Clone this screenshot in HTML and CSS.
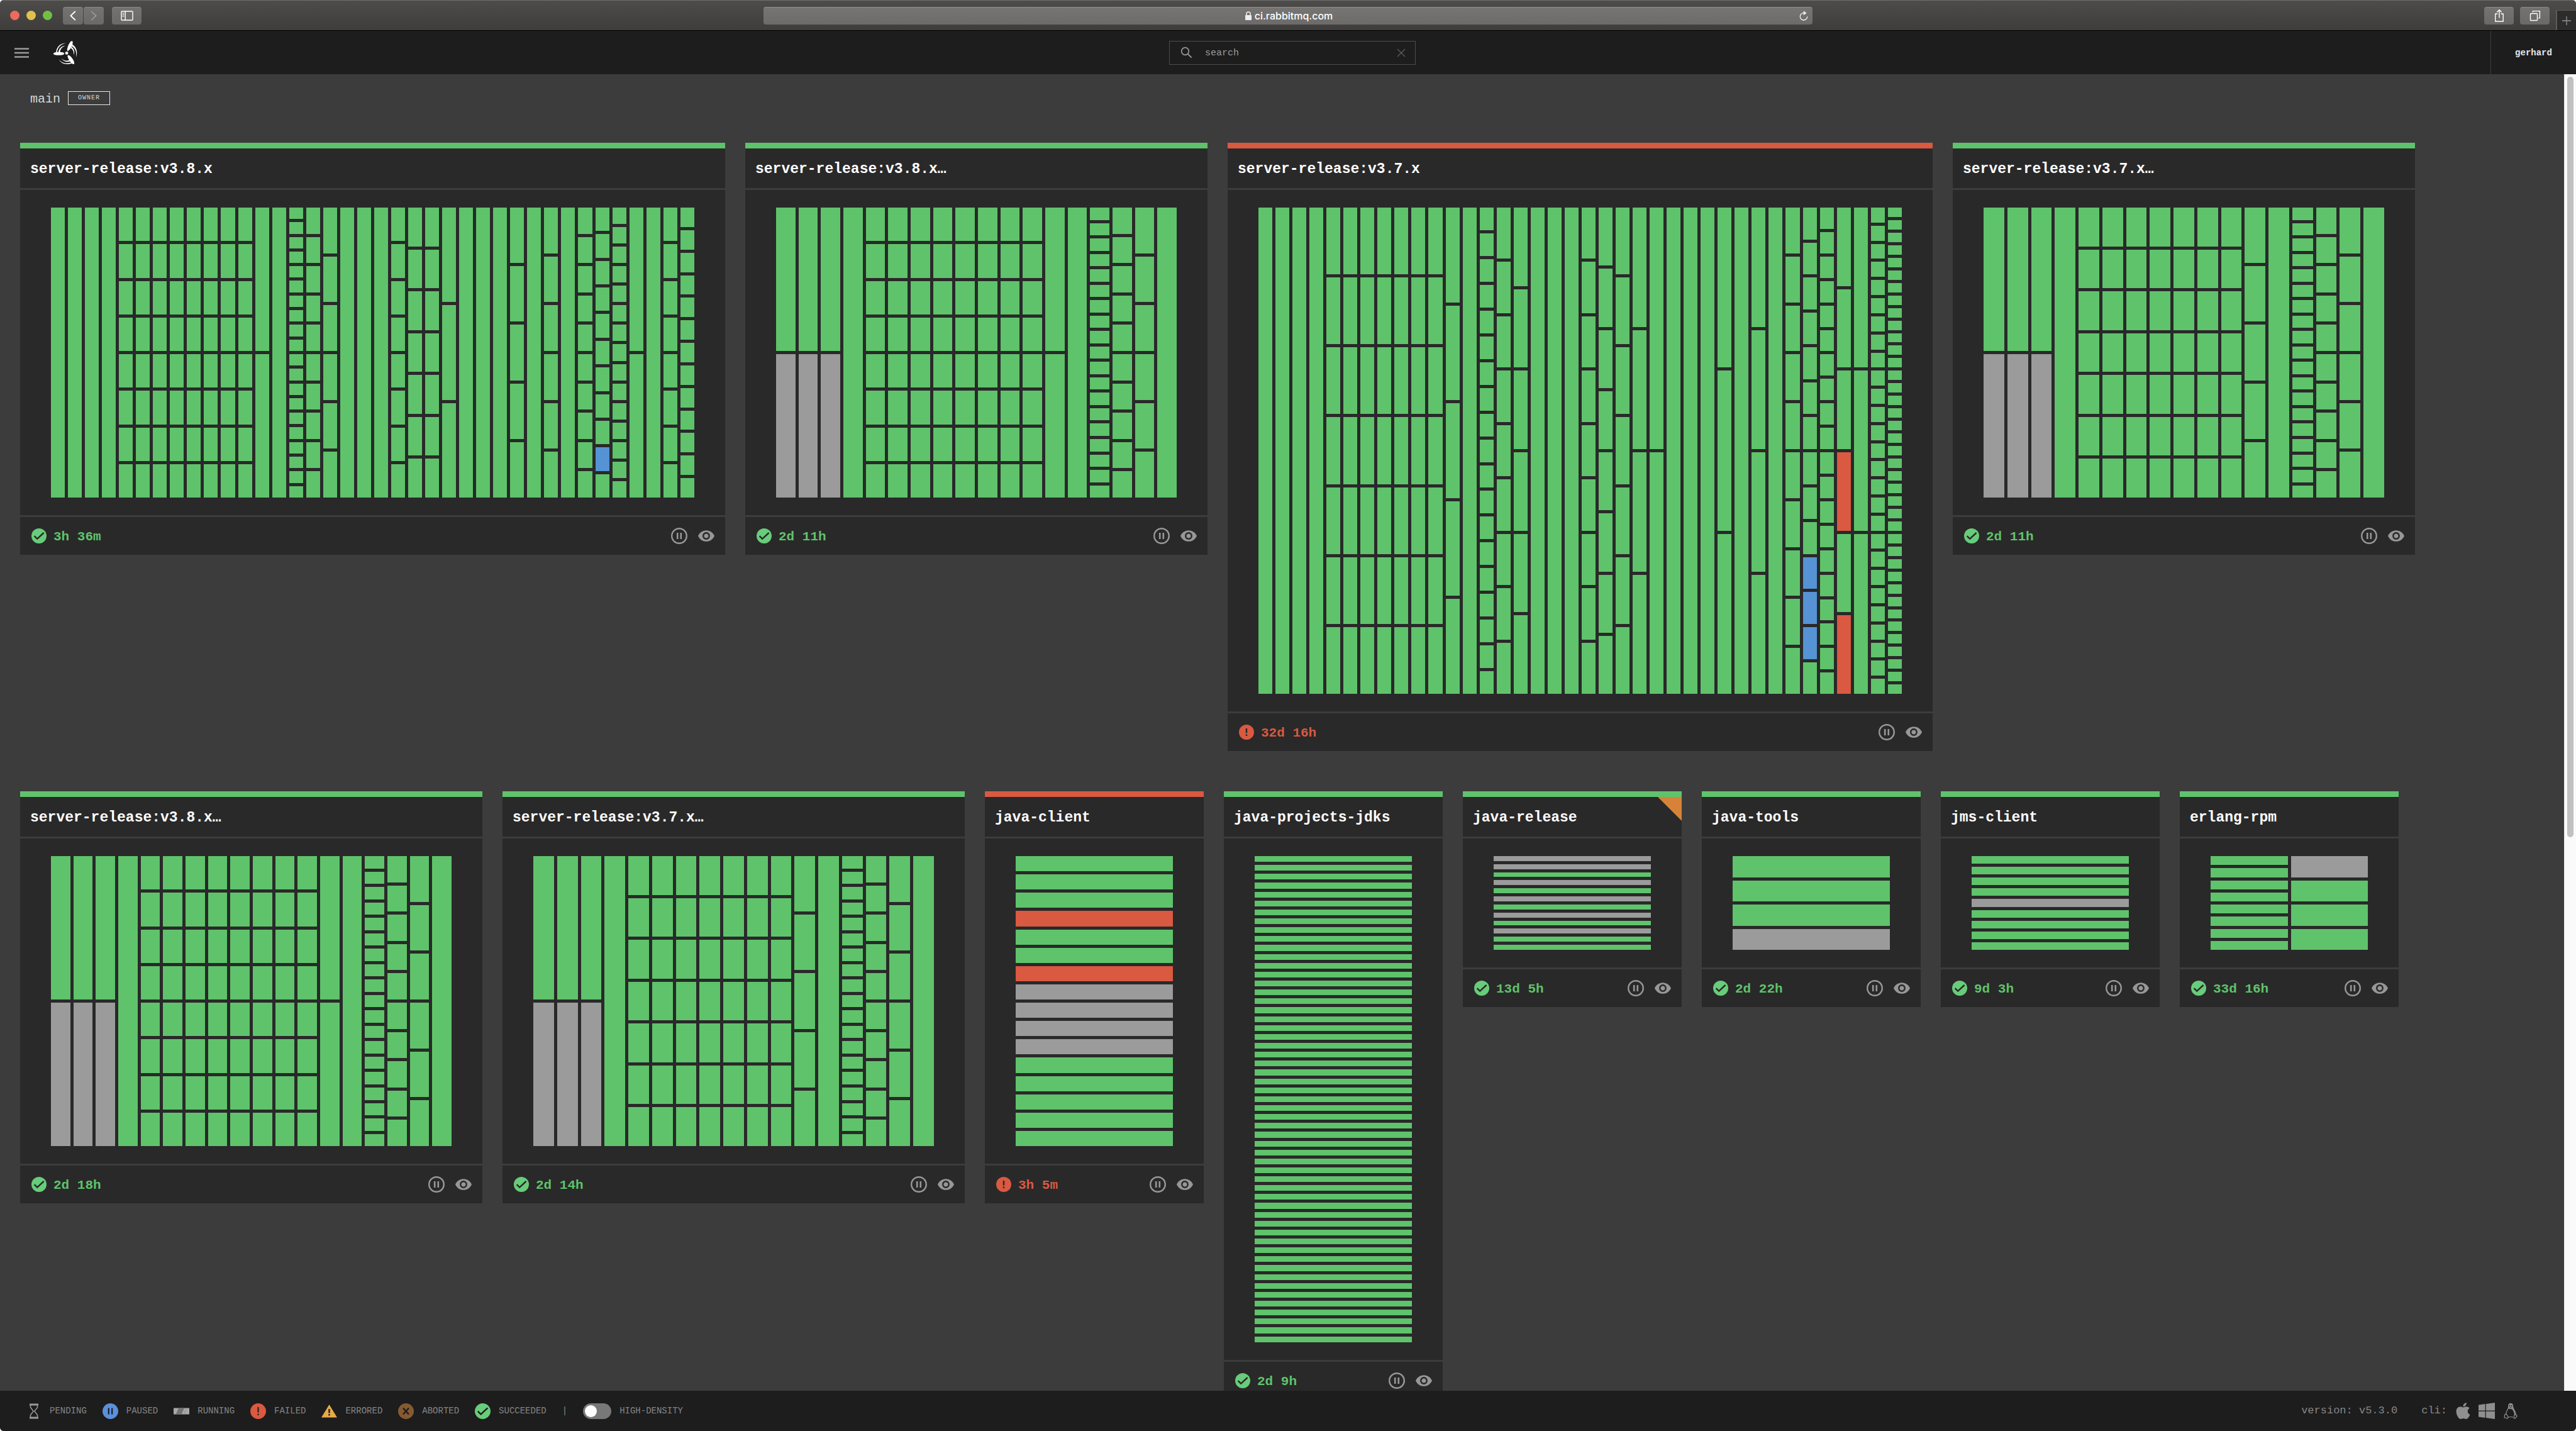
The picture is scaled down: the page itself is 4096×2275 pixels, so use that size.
FILE: index.html
```html
<!DOCTYPE html>
<html lang="en">
<head>
<meta charset="utf-8">
<title>Concourse</title>
<link rel="stylesheet" href="styles.css">
</head>
<body>
<svg class="sprite" aria-hidden="true">
  <symbol id="succeeded" viewBox="0 0 24 24"><circle cx="12" cy="12" r="12" fill="#68cc7a"/><path d="M4.6 12.2l4.6 4.4L19.6 7" fill="none" stroke="#292929" stroke-width="2.4"/></symbol>
  <symbol id="failed" viewBox="0 0 24 24"><circle cx="12" cy="12" r="12" fill="#d95941"/><path d="M12 6v7.4M12 15.6v2.4" stroke="#292929" stroke-width="2.4"/></symbol>
  <symbol id="pause" viewBox="0 0 26 26"><circle cx="13" cy="13" r="11.8" fill="none" stroke="#979797" stroke-width="2.4"/><path d="M10.2 8v10M15.8 8v10" stroke="#979797" stroke-width="2.6"/></symbol>
  <symbol id="eye" viewBox="1 4.5 22 15"><path fill="#979797" d="M12 4.5C7 4.5 2.73 7.61 1 12c1.73 4.39 6 7.5 11 7.5s9.27-3.11 11-7.5c-1.73-4.39-6-7.5-11-7.5zM12 17c-2.76 0-5-2.24-5-5s2.24-5 5-5 5 2.24 5 5-2.24 5-5 5zm0-8c-1.66 0-3 1.34-3 3s1.34 3 3 3 3-1.34 3-3-1.34-3-3-3z"/></symbol>
</svg>

<div class="window">
  <div class="chrome">
    <div class="chrome-left">
      <span class="light light-close"></span><span class="light light-min"></span><span class="light light-max"></span>
      <div class="nav-pair">
        <button class="tool tool-nav" aria-label="Back"><svg width="10" height="16" viewBox="0 0 10 16"><path d="M8.8 1L1.4 8l7.4 7" fill="none" stroke="#fff" stroke-width="1.8"/></svg></button>
        <button class="tool tool-nav" aria-label="Forward"><svg width="10" height="16" viewBox="0 0 10 16"><path d="M1.2 1l7.4 7-7.4 7" fill="none" stroke="#a09f9d" stroke-width="1.6"/></svg></button>
      </div>
      <button class="tool" aria-label="Show sidebar"><svg width="20" height="16" viewBox="0 0 20 16"><rect x="1" y="1" width="18" height="14" rx="1" fill="none" stroke="#fff" stroke-width="1.4"/><path d="M7.2 1v14" stroke="#fff" stroke-width="1.4"/><path d="M2.6 4h2.8M2.6 6.5h2.8M2.6 9h2.8" stroke="#ddd" stroke-width="1.3"/></svg></button>
    </div>
    <div class="address">
      <span class="address-url"><svg width="12" height="14" viewBox="0 0 12 14"><path d="M3 7V4a3 3 0 0 1 6 0v3" fill="none" stroke="#eee" stroke-width="1.5"/><rect x="1" y="6" width="10" height="8" rx="1" fill="#eee"/></svg>ci.rabbitmq.com</span>
      <button class="reload" aria-label="Reload"><svg width="16" height="18" viewBox="0 0 16 18"><path d="M8 4.6a5.7 5.7 0 1 0 5.7 5.7" fill="none" stroke="#eee" stroke-width="1.3"/><path d="M7.6 1.2l5 3.5-5 3.5z" fill="#eee"/></svg></button>
    </div>
    <div class="chrome-right">
      <button class="tool" aria-label="Share"><svg width="16" height="22" viewBox="0 0 16 22"><path d="M5.4 8H1.8v12h12.4V8h-3.6M8 14.4V2M4.2 5.6L8 1.8l3.8 3.8" fill="none" stroke="#fff" stroke-width="1.4"/></svg></button>
      <button class="tool" aria-label="Show tabs"><svg width="18" height="18" viewBox="0 0 18 18"><rect x="1.5" y="5.5" width="11" height="11" rx="1" fill="none" stroke="#fff" stroke-width="1.4"/><path d="M5.4 3.6V1.6h11v11h-2.2" fill="none" stroke="#fff" stroke-width="1.4"/></svg></button>
      <button class="new-tab" aria-label="New tab"><svg width="14" height="14" viewBox="0 0 14 14"><path d="M7 0v14M0 7h14" stroke="#959595" stroke-width="1.3"/></svg></button>
    </div>
  </div>

  <header class="topbar">
    <div class="topbar-left">
      <button class="square" aria-label="Menu"><svg width="23" height="16" viewBox="0 0 23 16"><path d="M0 1.5h23M0 8h23M0 14.5h23" stroke="#9b9b9b" stroke-width="2.6"/></svg></button>
      <a class="square" href="/" aria-label="Home"><svg width="38" height="38" viewBox="0 0 60 60" fill="#fff">
        <circle cx="33.2" cy="30.6" r="3.8"/>
        <path d="M35.5 25.7C33.5 24 34.4 17.600 38 9.600 41.200 2.700 44 .2 46.600.3 49 .6 48.800 4.600 47.200 10 45 17.300 41.500 21.600 37.500 25z"/>
        <path d="M27 31.500C27 33.600 24.500 36 15 36 5 36 0 34.600 0 32.300 0 29.800 4.500 28.800 11 28.200 19 27.500 27 28.700 27 31.500z"/>
        <path d="M35.400 38.500C35.200 36.500 36.500 35.300 38.500 36 43 38 47.500 43.500 50.500 49.500 52.500 54 53 58 51.300 58.400 49 59 45 56.300 42 52 39 47.700 36.200 43 35.400 38.500z"/>
        <path d="M6.500 29C7.500 15 17 5.500 32 6 19.500 7.500 10.500 16 9 29z"/>
        <path d="M12.500 29C13.500 19.500 19.500 13 29.500 12.200 21.500 15 17 20.500 16.500 29z"/>
        <path d="M47 8.500C57.500 15 62 27.500 56.500 41.500 58.800 28.500 55.500 19 45.500 13z"/>
        <path d="M45 15C52 19.500 54.500 27.500 50.500 36 51.500 28.500 50 22.500 43.500 18z"/>
        <path d="M13.300 45C18 53.500 28 59.500 46 54L47 56C31 62 17.500 56.500 13.300 45z"/>
        <path d="M20 43.500C25 49.300 32 51.200 40 48.300L42 51.500C33 54.500 24 51.500 20 43.500z"/>
      </svg></a>
    </div>
    <label class="search">
      <svg width="19" height="19" viewBox="0 0 19 19"><circle cx="7.500" cy="7.500" r="5.800" fill="none" stroke="#9b9b9b" stroke-width="1.700"/><path d="M11.600 11.600l6 6" stroke="#9b9b9b" stroke-width="1.900"/></svg>
      <input type="text" placeholder="search" aria-label="search">
      <button class="clear" aria-label="Clear search"><svg width="14" height="14" viewBox="0 0 14 14"><path d="M1 1l12 12M13 1L1 13" stroke="#5c5c5c" stroke-width="1.300"/></svg></button>
    </label>
    <a class="user" href="#user">gerhard</a>
  </header>

  <div class="body">
    <main class="dashboard">
      <div class="team"><h1 class="team-name">main</h1><span class="team-role">OWNER</span></div>
      <div class="cards">

        <article class="card card-wide">
          <h2 class="card-title">server-release:v3.8.x</h2>
          <div class="preview" data-jobs="1s*4 8s*8 2s 1s 20s 10s 6s 1s*3 8s 7s*2 3s 1s*3 5s 1s 6s 1s 10s 9s1p1s 15s 2s 1s 8s 13s"></div>
          <div class="card-foot"><svg class="status"><use href="#succeeded"/></svg><span class="age">3h 36m</span><button class="act" aria-label="Pause"><svg class="i-pause"><use href="#pause"/></svg></button><button class="act" aria-label="Visibility"><svg class="i-eye"><use href="#eye"/></svg></button></div>
        </article>

        <article class="card card-medium">
          <h2 class="card-title">server-release:v3.8.x…</h2>
          <div class="preview" data-jobs="1s1n*3 1s 8s*8 2s 1s 19s 10s 6s 1s"></div>
          <div class="card-foot"><svg class="status"><use href="#succeeded"/></svg><span class="age">2d 11h</span><button class="act" aria-label="Pause"><svg class="i-pause"><use href="#pause"/></svg></button><button class="act" aria-label="Visibility"><svg class="i-eye"><use href="#eye"/></svg></button></div>
        </article>

        <article class="card card-wide card-failed">
          <h2 class="card-title">server-release:v3.7.x</h2>
          <div class="preview preview-tall" data-jobs="1s*4 7s*7 5s 1s 19s 9s 6s 1s*3 9s 8s 7s 4s 2s 1s*3 3s 1s 4s 1s 10s 10s3p1s 20s 3s1f1s1f 3s 27s 39s"></div>
          <div class="card-foot"><svg class="status"><use href="#failed"/></svg><span class="age">32d 16h</span><button class="act" aria-label="Pause"><svg class="i-pause"><use href="#pause"/></svg></button><button class="act" aria-label="Visibility"><svg class="i-eye"><use href="#eye"/></svg></button></div>
        </article>

        <article class="card card-medium">
          <h2 class="card-title">server-release:v3.7.x…</h2>
          <div class="preview" data-jobs="1s1n*3 1s 7s*7 5s 1s 19s 10s 6s 1s"></div>
          <div class="card-foot"><svg class="status"><use href="#succeeded"/></svg><span class="age">2d 11h</span><button class="act" aria-label="Pause"><svg class="i-pause"><use href="#pause"/></svg></button><button class="act" aria-label="Visibility"><svg class="i-eye"><use href="#eye"/></svg></button></div>
        </article>

        <article class="card card-medium">
          <h2 class="card-title">server-release:v3.8.x…</h2>
          <div class="preview" data-jobs="1s1n*3 1s 8s*8 2s 1s 19s 10s 6s 1s"></div>
          <div class="card-foot"><svg class="status"><use href="#succeeded"/></svg><span class="age">2d 18h</span><button class="act" aria-label="Pause"><svg class="i-pause"><use href="#pause"/></svg></button><button class="act" aria-label="Visibility"><svg class="i-eye"><use href="#eye"/></svg></button></div>
        </article>

        <article class="card card-medium">
          <h2 class="card-title">server-release:v3.7.x…</h2>
          <div class="preview" data-jobs="1s1n*3 1s 7s*7 5s 1s 19s 10s 6s 1s"></div>
          <div class="card-foot"><svg class="status"><use href="#succeeded"/></svg><span class="age">2d 14h</span><button class="act" aria-label="Pause"><svg class="i-pause"><use href="#pause"/></svg></button><button class="act" aria-label="Visibility"><svg class="i-eye"><use href="#eye"/></svg></button></div>
        </article>

        <article class="card card-failed">
          <h2 class="card-title">java-client</h2>
          <div class="preview" data-jobs="3s1f2s1f4n5s"></div>
          <div class="card-foot"><svg class="status"><use href="#failed"/></svg><span class="age">3h 5m</span><button class="act" aria-label="Pause"><svg class="i-pause"><use href="#pause"/></svg></button><button class="act" aria-label="Visibility"><svg class="i-eye"><use href="#eye"/></svg></button></div>
        </article>

        <article class="card">
          <h2 class="card-title">java-projects-jdks</h2>
          <div class="preview preview-tall" data-jobs="55s"></div>
          <div class="card-foot"><svg class="status"><use href="#succeeded"/></svg><span class="age">2d 9h</span><button class="act" aria-label="Pause"><svg class="i-pause"><use href="#pause"/></svg></button><button class="act" aria-label="Visibility"><svg class="i-eye"><use href="#eye"/></svg></button></div>
        </article>

        <article class="card card-flagged">
          <h2 class="card-title">java-release</h2>
          <div class="preview preview-short" data-jobs="2n1s1n1s1n1s1n1s1n2s"></div>
          <div class="card-foot"><svg class="status"><use href="#succeeded"/></svg><span class="age">13d 5h</span><button class="act" aria-label="Pause"><svg class="i-pause"><use href="#pause"/></svg></button><button class="act" aria-label="Visibility"><svg class="i-eye"><use href="#eye"/></svg></button></div>
        </article>

        <article class="card">
          <h2 class="card-title">java-tools</h2>
          <div class="preview preview-short" data-jobs="3s1n"></div>
          <div class="card-foot"><svg class="status"><use href="#succeeded"/></svg><span class="age">2d 22h</span><button class="act" aria-label="Pause"><svg class="i-pause"><use href="#pause"/></svg></button><button class="act" aria-label="Visibility"><svg class="i-eye"><use href="#eye"/></svg></button></div>
        </article>

        <article class="card">
          <h2 class="card-title">jms-client</h2>
          <div class="preview preview-short" data-jobs="4s1n4s"></div>
          <div class="card-foot"><svg class="status"><use href="#succeeded"/></svg><span class="age">9d 3h</span><button class="act" aria-label="Pause"><svg class="i-pause"><use href="#pause"/></svg></button><button class="act" aria-label="Visibility"><svg class="i-eye"><use href="#eye"/></svg></button></div>
        </article>

        <article class="card">
          <h2 class="card-title">erlang-rpm</h2>
          <div class="preview preview-short" data-jobs="8s 1n3s"></div>
          <div class="card-foot"><svg class="status"><use href="#succeeded"/></svg><span class="age">33d 16h</span><button class="act" aria-label="Pause"><svg class="i-pause"><use href="#pause"/></svg></button><button class="act" aria-label="Visibility"><svg class="i-eye"><use href="#eye"/></svg></button></div>
        </article>

      </div>
    </main>
    <div class="scrollbar"><div class="scroll-thumb"></div></div>
  </div>

  <footer class="legend">
    <div class="legend-items">
      <span class="legend-item"><svg class="legend-icon" viewBox="0 0 25 25"><path d="M6 .5h14v3H6zM6 21.500h14v3H6z" fill="#9b9b9b"/><path d="M7.500 3v3.500L12.200 12.500 7.500 18.500V22M18.500 3v3.500L13.800 12.500l4.700 6V22" fill="none" stroke="#9b9b9b" stroke-width="1.500"/></svg>PENDING</span>
      <span class="legend-item"><svg class="legend-icon" viewBox="0 0 25 25"><circle cx="12.500" cy="12.500" r="12.500" fill="#5c8fdc"/><path d="M9.800 7.500v10M15.200 7.500v10" stroke="#1d1d1d" stroke-width="2.200"/></svg>PAUSED</span>
      <span class="legend-item"><svg class="legend-icon" viewBox="0 0 25 25"><path d="M0 7.500h25v10H0z" fill="#a9a9a9"/><path d="M8 7.500h9L12.500 17.500H3.500z" fill="#747474"/><path d="M20 7.500h2L17.500 17.500h-2z" fill="#9a9a9a"/></svg>RUNNING</span>
      <span class="legend-item"><svg class="legend-icon" viewBox="0 0 25 25"><circle cx="12.500" cy="12.500" r="12.500" fill="#d95941"/><path d="M12.500 6v8.500M12.500 16.500v2.500" stroke="#1d1d1d" stroke-width="2"/></svg>FAILED</span>
      <span class="legend-item"><svg class="legend-icon" viewBox="0 0 25 25"><path d="M12.500 2L25 22.500H0z" fill="#e9a944"/><path d="M12.500 9v6.500M12.500 17v2.500" stroke="#1d1d1d" stroke-width="2.400"/></svg>ERRORED</span>
      <span class="legend-item"><svg class="legend-icon" viewBox="0 0 25 25"><circle cx="12.500" cy="12.500" r="12.500" fill="#865a30"/><path d="M8 7.500l9 10M17 7.500l-9 10" stroke="#1d1d1d" stroke-width="2.400"/></svg>ABORTED</span>
      <span class="legend-item"><svg class="legend-icon" viewBox="0 0 25 25"><circle cx="12.500" cy="12.500" r="12.500" fill="#68cc7a"/><path d="M4.800 12.700l4.800 4.600L20.400 7.300" fill="none" stroke="#1d1d1d" stroke-width="2.400"/></svg>SUCCEEDED</span>
      <span>|</span>
      <label class="legend-item"><input class="toggle" type="checkbox">HIGH-DENSITY</label>
    </div>
    <div class="info">
      <span>version: v5.3.0</span>
      <div class="cli">
        <span>cli:</span>
        <a href="#darwin" aria-label="macOS"><svg viewBox="-40 32 448 448"><path fill="#8f8f8f" d="M318.7 268.7c-.2-36.7 16.4-64.4 50-84.8-18.8-26.9-47.2-41.7-84.7-44.6-35.5-2.8-74.3 20.7-88.5 20.7-15 0-49.400-19.700-76.400-19.700C63.300 141.200 4 184.800 4 273.500q0 39.300 14.400 81.200c12.800 36.700 59 126.700 107.200 125.200 25.200-.6 43-17.900 75.800-17.900 31.800 0 48.300 17.900 76.400 17.900 48.600-.7 90.400-82.500 102.600-119.300-65.200-30.700-61.700-90-61.700-91.900zm-56.600-164.200c27.300-32.400 24.800-61.900 24-72.500-24.100 1.400-52 16.400-67.900 34.900-17.500 19.800-27.800 44.300-25.600 71.900 26.100 2 49.900-11.400 69.500-34.300z"/></svg></a>
        <a href="#windows" aria-label="Windows"><svg viewBox="0 32 448 448"><path fill="#8f8f8f" d="M0 93.700l183.600-25.300v177.400H0V93.700zm0 324.600l183.600 25.300V268.400H0v149.900zm203.800 28L448 480V268.400H203.800v177.900zm0-380.600v180.100H448V32L203.800 65.700z"/></svg></a>
        <a href="#linux" aria-label="Linux"><svg viewBox="0 0 26 26"><path d="M9.200 9.500C8.800 6 8.500 1 13 .800c4.500.2 4.200 4 4.400 6.200.4 3 4.400 6.500 4.300 12.500l-2.600.5c0-4-1.500-6.500-3.500-9.500z" fill="#8f8f8f"/><path d="M9.300 8.500C8.300 11.500 5.600 14 5.500 18M9 23.200c2.500-.9 5.500-.9 8 0" fill="none" stroke="#8f8f8f" stroke-width="1.200"/><path d="M3.600 19l2.700-.8 3.200 5.200-2 1.600-4.300-1.400zM22.600 19.500l-3.600 0-1 4.500 1.600 1.200 3.600-3.700z" fill="none" stroke="#8f8f8f" stroke-width="1.200"/><circle cx="11.300" cy="5" r="1" fill="#1d1d1d"/><circle cx="14.600" cy="5" r="1" fill="#1d1d1d"/><path d="M11 7.400h4l-2 1.400z" fill="#1d1d1d"/></svg></a>
      </div>
    </div>
  </footer>
</div>
<script src="preview.js"></script>
</body>
</html>
```

FILE: styles.css
```css
* { box-sizing: border-box; }

body {
  margin: 0;
  background: #fff;
  color: #fff;
  font-family: "Liberation Mono", monospace;
}

h1, h2 { margin: 0; }

button {
  padding: 0;
  border: 0;
  background: none;
  font: inherit;
  color: inherit;
}

a { color: inherit; text-decoration: none; }

svg { display: block; }

.sprite { position: absolute; width: 0; height: 0; }

.window {
  display: flex;
  flex-direction: column;
  height: 100vh;
  overflow: hidden;
  border-radius: 6px;
  background: #3c3c3c;
}

/* Browser toolbar */
.chrome {
  display: grid;
  grid-template-columns: 1fr minmax(0, 1668px) 1fr;
  flex: none;
  align-items: center;
  height: 49px;
  border-top: 1px solid #6e6d6b;
  border-bottom: 1px solid #000;
  background: linear-gradient(#4d4c4a, #3e3d3b);
}

.chrome-left {
  display: flex;
  align-items: center;
  gap: 11px;
  padding-left: 16px;
}

.light { width: 15px; height: 15px; border-radius: 50%; }
.light-close { background: #ed6a5e; }
.light-min { background: #e0c14c; }
.light-max { background: #72bf47; }

.nav-pair { display: flex; gap: 1px; margin: 0 2px 0 6px; }

.tool {
  display: flex;
  align-items: center;
  justify-content: center;
  width: 47px;
  height: 28px;
  border-top: 1px solid #8a8987;
  border-radius: 4px;
  background: linear-gradient(#747371, #6a6967);
}

.tool-nav { width: 32px; }

.address {
  display: flex;
  align-items: center;
  height: 28px;
  padding: 0 6px;
  border-top: 1px solid #8f8e8c;
  border-radius: 4px;
  background: linear-gradient(#767573, #6c6b69);
}

.address-url {
  display: flex;
  flex: 1;
  align-items: center;
  justify-content: center;
  gap: 4px;
  padding-left: 18px;
  font: 500 16px/20px Inter, sans-serif;
}

.chrome-right {
  display: flex;
  align-items: center;
  justify-content: flex-end;
  gap: 10px;
  height: 47px;
}

.new-tab {
  display: flex;
  align-items: center;
  justify-content: center;
  align-self: flex-end;
  width: 32px;
  height: 32px;
  border-top: 1px solid #5c5b5a;
  border-left: 2px solid #5c5b5a;
  background: #2d2c2c;
}

/* Top bar */
.topbar {
  display: flex;
  flex: none;
  justify-content: space-between;
  align-items: center;
  height: 69px;
  background: #1d1d1d;
}

.topbar-left { display: flex; padding-right: 12px; }

.square {
  display: flex;
  align-items: center;
  justify-content: center;
  width: 69px;
  height: 69px;
}

.search {
  display: flex;
  align-items: center;
  gap: 20px;
  width: 392px;
  height: 38px;
  padding: 0 15px 0 17px;
  border: 1px solid #504b4b;
}

.search input {
  flex: 1;
  min-width: 0;
  padding: 2px 0 0;
  border: 0;
  outline: 0;
  background: none;
  color: #fff;
  font: 15px/20px "Liberation Mono", monospace;
}

.search input::placeholder { color: #9b9b9b; }

.user {
  display: flex;
  align-items: center;
  justify-content: center;
  align-self: stretch;
  width: 136px;
  border-left: 1px solid #3d3c3c;
  color: #e6e7e8;
  font-size: 14px;
  font-weight: 700;
}

/* Dashboard */
.body { display: flex; flex: 1; min-height: 0; }

.dashboard { flex: 1; min-width: 0; overflow: hidden; }

.team {
  display: flex;
  align-items: center;
  gap: 12px;
  height: 109px;
  padding: 0 48px 33px;
}

.team-name {
  padding-top: 3px;
  color: #d6d6d6;
  font-size: 20px;
  font-weight: 400;
  line-height: 22px;
}

.team-role {
  padding: 0 15px;
  border: 1px solid #e6e7e8;
  color: #d6d6d6;
  font-size: 10px;
  line-height: 20px;
  letter-spacing: 1px;
}

.cards {
  display: flex;
  flex-wrap: wrap;
  align-items: flex-start;
  gap: 64px 32px;
  padding: 0 32px;
}

.card {
  position: relative;
  width: 348px;
  border-top: 9px solid #5fc36b;
  background: #292929;
}

.card-medium { width: 735px; }
.card-wide { width: 1121px; }
.card-failed { border-color: #d95941; }

.card-flagged::after {
  content: "";
  position: absolute;
  top: 0;
  right: 0;
  width: 38px;
  height: 38px;
  background: #d68339;
  clip-path: polygon(0 0, 100% 0, 100% 100%);
}

.card-title {
  padding: 4px 16px 0;
  font-size: 23px;
  font-weight: 700;
  line-height: 59px;
  white-space: nowrap;
}

.preview {
  display: flex;
  gap: 5px;
  height: 523px;
  padding: 28px 49px;
  border-top: 3px solid #3c3c3c;
  border-bottom: 3px solid #3c3c3c;
}

.preview-tall { height: 835px; }
.preview-short { height: 211px; }

.column {
  display: flex;
  flex: 1;
  flex-direction: column;
  gap: 5px;
}

.job { flex: 1; min-height: 0; }
.job-succeeded { background: #5fc36b; }
.job-paused { background: #5593d5; }
.job-failed { background: #d95941; }
.job-pending { background: #9b9b9b; }

.card-foot {
  display: flex;
  align-items: center;
  gap: 17px;
  height: 60px;
  padding: 0 17px 0 18px;
}

.status { width: 24px; height: 24px; }

.age {
  flex: 1;
  margin-left: -6px;
  padding-top: 3px;
  color: #5fc36b;
  font-size: 21px;
  font-weight: 700;
  line-height: 24px;
}

.card-failed .age { color: #d95941; }

.i-pause { width: 26px; height: 26px; }
.i-eye { width: 26px; height: 18px; }

/* Page scrollbar */
.scrollbar {
  width: 19px;
  padding: 4px;
  border-left: 1px solid #e8e8e8;
  background: #fafafa;
}

.scroll-thumb {
  height: 58%;
  border-radius: 5px;
  background: #c1c1c1;
}

/* Legend */
.legend {
  display: flex;
  flex: none;
  align-items: center;
  justify-content: space-between;
  height: 64px;
  padding: 0 91px 0 41px;
  background: #1d1d1d;
  color: #868686;
  font-size: 14px;
  line-height: 20px;
}

.legend-items { display: flex; align-items: center; gap: 25px; }
.legend-item { display: flex; align-items: center; gap: 13px; }
.legend-icon { width: 25px; height: 25px; }

.toggle {
  appearance: none;
  width: 45px;
  height: 25px;
  margin: 0;
  padding: 3px;
  border-radius: 13px;
  background: #787878;
}

.toggle::before {
  content: "";
  display: block;
  width: 19px;
  height: 19px;
  border-radius: 50%;
  background: #fff;
}

.info { display: flex; align-items: center; gap: 38px; font-size: 17px; }
.cli { display: flex; align-items: center; gap: 12px; }
.cli svg { width: 26px; height: 26px; }
```

FILE: preview.js
```js
// Each preview lists its columns from left to right. A column is a run of
// jobs from top to bottom ("9s1p1s"), and "*n" repeats that column n times.
const states = { s: "succeeded", p: "paused", f: "failed", n: "pending" };

for (const preview of document.querySelectorAll(".preview")) {
  for (const token of preview.dataset.jobs.split(" ")) {
    const [runs, times = "1"] = token.split("*");
    for (let i = 0; i < Number(times); i++) {
      const column = document.createElement("div");
      column.className = "column";
      for (const [, count, state] of runs.matchAll(/(\d+)([spfn])/g)) {
        for (let j = 0; j < Number(count); j++) {
          const job = document.createElement("div");
          job.className = "job job-" + states[state];
          column.append(job);
        }
      }
      preview.append(column);
    }
  }
}
```
